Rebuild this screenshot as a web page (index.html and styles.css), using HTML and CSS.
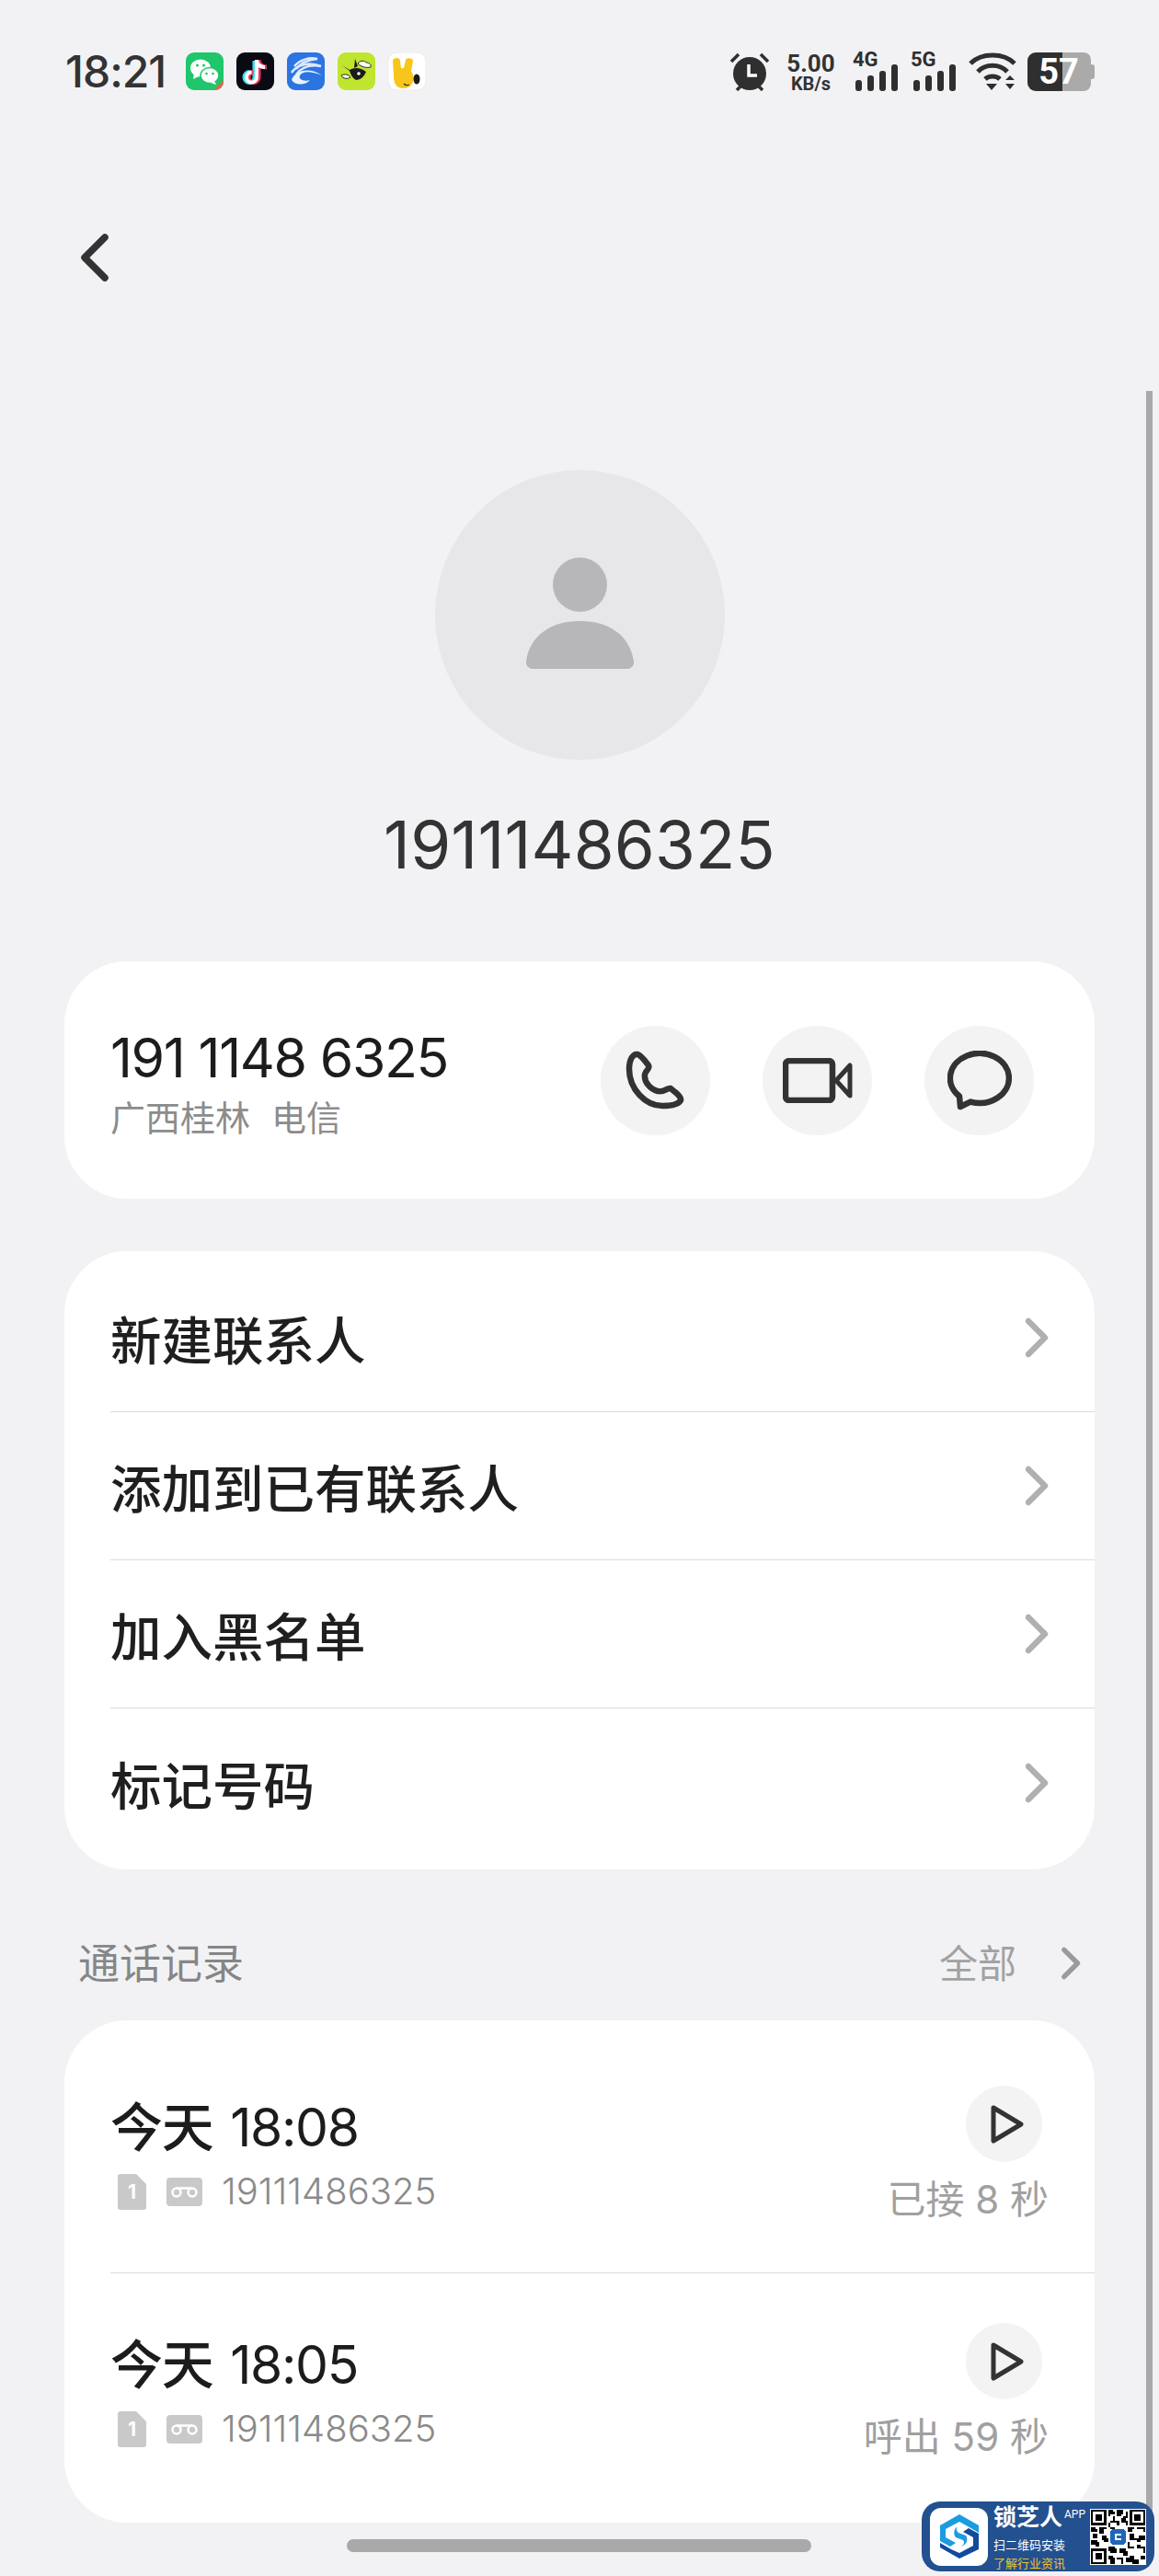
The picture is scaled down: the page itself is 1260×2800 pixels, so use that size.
FILE: index.html
```html
<!DOCTYPE html>
<html>

<head>
    <meta charset="utf-8">
    <link rel="stylesheet" href="styles.css">
</head>

<body>
    <div class="screen">
        <div class="status">
            <div class="status-left">
                <span class="clock">18:21</span>
                <svg class="app" viewBox="0 0 41 41">
                    <rect width="41" height="41" rx="9" fill="#1fc66b" />
                    <ellipse cx="16" cy="17" rx="11" ry="9.500" fill="#fff" />
                    <path d="M9 23l-1 6 6-3z" fill="#fff" />
                    <ellipse cx="26" cy="25" rx="10" ry="8.500" fill="#fff" stroke="#1fc66b" stroke-width="1.500" />
                    <path d="M31 31l2 4-6-2z" fill="#fff" />
                    <circle cx="12.500" cy="14" r="1.500" fill="#1fc66b" />
                    <circle cx="19.500" cy="14" r="1.500" fill="#1fc66b" />
                    <circle cx="22.500" cy="23" r="1.300" fill="#1fc66b" />
                    <circle cx="29.500" cy="23" r="1.300" fill="#1fc66b" />
                    <path d="M41 30v2a9 9 0 0 1-9 9h-2z" fill="#d9694f" />
                </svg>
                <svg class="app" viewBox="0 0 41 41">
                    <rect width="41" height="41" rx="9" fill="#0a0a14" />
                    <path d="M20 9v18a5.500 5.500 0 1 1-5.500-5.500" fill="none" stroke="#3de3ea" stroke-width="5" />
                    <path d="M24 8v19a5.500 5.500 0 1 1-5.500-5.500M24 9c1 5 4 7 9 7" fill="none" stroke="#f0345c" stroke-width="5" />
                    <path d="M22 8v19a5.500 5.500 0 1 1-5.500-5.500M22 9c1 5 4 7 9 7" fill="none" stroke="#fff" stroke-width="4" />
                </svg>
                <svg class="app" viewBox="0 0 41 41">
                    <rect width="41" height="41" rx="9" fill="#2b74e2" />
                    <path d="M8 15C14 8 24 5 33 7C24 8 15 11 10 18" fill="none" stroke="#dbe9fb" stroke-width="2.500" />
                    <path d="M5 22C11 13 24 10 37 15C26 13 16 16 10 24" fill="none" stroke="#dbe9fb" stroke-width="2.500" />
                    <path d="M5 30C8 20 24 15 38 25C26 20 17 20 14 25C12 29 18 32 25 30C20 36 9 36 5 30Z" fill="#eaf2fd" />
                </svg>
                <svg class="app" viewBox="0 0 41 41">
                    <rect width="41" height="41" rx="9" fill="#bfe52e" />
                    <path d="M22 12c3-4 8-3 9-1 4 0 6 3 5 5-5 1-10 0-14-4z" fill="#fff" stroke="#222" />
                    <path d="M5 14l8 5c5-3 12-3 18 2-2 5-6 9-11 9-4-2-6-7-7-10z" fill="#1b1b1b" />
                    <path d="M4 25c4-2 8-1 10 2-3 2-8 2-10-2z" fill="#fff" stroke="#222" />
                    <path d="M19 7l3 8-4 2z" fill="#1b1b1b" />
                    <circle cx="23" cy="23" r="1.800" fill="#fff" />
                </svg>
                <svg class="app" viewBox="0 0 41 41">
                    <rect width="41" height="41" rx="9" fill="#fff" stroke="#e8e8e8" />
                    <path d="M5 9c0-4 8-4 8 0l1 8 3 0 2-9c1-3 8-2 8 1l-2 12c5 5 3 18-8 18-9 0-11-6-11-14z" fill="#f8c51c" />
                    <ellipse cx="31" cy="29" rx="3.500" ry="5.500" fill="#1a1a1a" />
                    <path d="M17 34c2 2 4 2 6 1" fill="none" stroke="#333" stroke-width="1.300" />
                </svg>
            </div>
            <div class="status-right">
                <svg class="alarm" viewBox="0 0 44 42">
                    <circle cx="22" cy="23" r="18" fill="#2f2f2f" />
                    <path d="M2 10L10 2M42 10L34 2M8 41l4-4M36 41l-4-4" stroke="#2f2f2f" stroke-width="3.500" />
                    <path d="M21 13v12h9" fill="none" stroke="#fff" stroke-width="3.500" />
                </svg>
                <div class="speed"><span>5.00</span><span class="speed-unit">KB/s</span></div>
                <div class="signal">
                    <span class="signal-label">4G</span>
                    <svg width="50" height="42" viewBox="0 0 50 42">
                        <rect x="3" y="30" width="7" height="12" rx="3" />
                        <rect x="16" y="25" width="7" height="17" rx="3" />
                        <rect x="29" y="20" width="7" height="22" rx="3" />
                        <rect x="42" y="13" width="7" height="29" rx="3" />
                    </svg>
                </div>
                <div class="signal">
                    <span class="signal-label">5G</span>
                    <svg width="50" height="42" viewBox="0 0 50 42">
                        <rect x="3" y="30" width="7" height="12" rx="3" />
                        <rect x="16" y="25" width="7" height="17" rx="3" />
                        <rect x="29" y="20" width="7" height="22" rx="3" />
                        <rect x="42" y="13" width="7" height="29" rx="3" />
                    </svg>
                </div>
                <svg class="wifi" viewBox="0 0 52 42">
                    <path d="M2 12C14 0 38 0 50 12M10 21C18 12 34 12 42 21M18 29C22 25 30 25 34 29" fill="none" stroke="#2f2f2f" stroke-width="5" />
                    <path d="M19 34h12l-6 7zM40 30l5-5 5 5zM40 34h10l-5 6z" fill="#2f2f2f" />
                </svg>
                <svg class="battery" viewBox="0 0 73 42">
                    <path d="M38 0h23a8 8 0 0 1 8 8v26a8 8 0 0 1-8 8H38z" fill="#aaaaaa" />
                    <path d="M69 13h1a3 3 0 0 1 3 3v10a3 3 0 0 1-3 3h-1z" fill="#aaaaaa" />
                    <path d="M38 0H9a9 9 0 0 0-9 9v24a9 9 0 0 0 9 9h29z" fill="#2f2f2f" />
                    <text x="34" y="34" class="battery-level">57</text>
                </svg>
            </div>
        </div>

        <svg class="back" viewBox="0 0 34 54">
            <path d="M29 5L7 27l22 22" fill="none" stroke="#333" stroke-width="7.500" stroke-linecap="round" stroke-linejoin="round" />
        </svg>

        <div class="hero">
            <div class="avatar">
                <svg class="avatar-person" viewBox="0 0 117 121">
                    <circle cx="58.500" cy="29.500" r="29.500" />
                    <path d="M0 113C4 84 28 69 58.500 69S113 84 117 113a7 7 0 0 1-6 8H6a7 7 0 0 1-6-8z" />
                </svg>
            </div>
            <h1 class="title">19111486325</h1>
        </div>

        <div class="card number-card">
            <div class="number-info">
                <div class="number">191 1148 6325</div>
                <div class="region"><span>广西桂林</span><span>电信</span></div>
            </div>
            <div class="actions">
                <div class="circle action">
                    <svg width="65" height="65" viewBox="0 0 65 65">
                        <path d="M13 4C8 3 4 10 4 20C4 42 22 60 40 60C50 60 58 58 60 54C61 50 54 45 49 41C45 40 42 46 35 44C27 42 20 34 21 26C22 21 27 20 25 16C22 12 17 5 13 4Z" class="line" stroke-width="6.500" />
                    </svg>
                </div>
                <div class="circle action">
                    <svg width="76" height="49" viewBox="0 0 76 49">
                        <rect x="3" y="3" width="51" height="43" rx="4" class="line" stroke-width="6.500" />
                        <path d="M58 24.500L73 8V41Z" class="line" stroke-width="5" />
                    </svg>
                </div>
                <div class="circle action">
                    <svg width="70" height="65" viewBox="0 0 70 65">
                        <path d="M25 55.600A32 27 0 1 0 13 49.600L14 61Z" class="line" stroke-width="6.500" />
                    </svg>
                </div>
            </div>
        </div>

        <div class="card menu-card">
            <div class="menu-row">
                <span>新建联系人</span>
                <svg class="chevron" viewBox="0 0 26 44"><path d="M3 4l18 18L3 40" /></svg>
            </div>
            <div class="menu-row">
                <span>添加到已有联系人</span>
                <svg class="chevron" viewBox="0 0 26 44"><path d="M3 4l18 18L3 40" /></svg>
            </div>
            <div class="menu-row">
                <span>加入黑名单</span>
                <svg class="chevron" viewBox="0 0 26 44"><path d="M3 4l18 18L3 40" /></svg>
            </div>
            <div class="menu-row">
                <span>标记号码</span>
                <svg class="chevron" viewBox="0 0 26 44"><path d="M3 4l18 18L3 40" /></svg>
            </div>
        </div>

        <div class="section-head">
            <span class="section-title">通话记录</span>
            <span class="section-all">全部</span>
            <svg class="section-chevron" viewBox="0 0 26 44"><path d="M3 4l18 18L3 40" /></svg>
        </div>

        <div class="card calls-card">
            <div class="call-row">
                <div class="call-info">
                    <div class="call-time"><span class="call-day">今天</span> 18:08</div>
                    <div class="call-sub">
                        <svg class="sim" viewBox="0 0 31 39">
                            <path d="M3 0h17l11 11v25a3 3 0 0 1-3 3H3a3 3 0 0 1-3-3V3a3 3 0 0 1 3-3z" />
                            <text x="15.500" y="27" class="sim-num">1</text>
                        </svg>
                        <svg class="voicemail" viewBox="0 0 39 31">
                            <rect width="39" height="31" rx="4" />
                            <circle cx="11" cy="16" r="4.500" class="vm-ring" />
                            <circle cx="28" cy="16" r="4.500" class="vm-ring" />
                            <path d="M11 11.500h17" class="vm-ring" />
                        </svg>
                        <span class="call-number">19111486325</span>
                    </div>
                </div>
                <div class="call-side">
                    <div class="circle play">
                        <svg width="36" height="42" viewBox="0 0 36 42"><path d="M3 3L33 21 3 39Z" class="line" stroke-width="5" /></svg>
                    </div>
                    <div class="call-result">已接 8 秒</div>
                </div>
            </div>
            <div class="call-row">
                <div class="call-info">
                    <div class="call-time"><span class="call-day">今天</span> 18:05</div>
                    <div class="call-sub">
                        <svg class="sim" viewBox="0 0 31 39">
                            <path d="M3 0h17l11 11v25a3 3 0 0 1-3 3H3a3 3 0 0 1-3-3V3a3 3 0 0 1 3-3z" />
                            <text x="15.500" y="27" class="sim-num">1</text>
                        </svg>
                        <svg class="voicemail" viewBox="0 0 39 31">
                            <rect width="39" height="31" rx="4" />
                            <circle cx="11" cy="16" r="4.500" class="vm-ring" />
                            <circle cx="28" cy="16" r="4.500" class="vm-ring" />
                            <path d="M11 11.500h17" class="vm-ring" />
                        </svg>
                        <span class="call-number">19111486325</span>
                    </div>
                </div>
                <div class="call-side">
                    <div class="circle play">
                        <svg width="36" height="42" viewBox="0 0 36 42"><path d="M3 3L33 21 3 39Z" class="line" stroke-width="5" /></svg>
                    </div>
                    <div class="call-result">呼出 59 秒</div>
                </div>
            </div>
        </div>

        <div class="scrollbar"></div>
        <div class="home-bar"></div>

        <div class="promo">
            <div class="promo-logo">
                <svg width="48" height="50" viewBox="0 0 48 50">
                    <path d="M24 1L45 13v8L33 14 24 9 9 17v9l11 6-6 4-11-6V13z" fill="#1b9ce0" />
                    <path d="M24 49L3 37v-5l12 7 9 4 15-8v-9l-11-6 6-4 11 6v17z" fill="#124a9c" />
                    <path d="M22 14c-4 3-5 8-2 12l8 3c2 2 1 5-2 7 6-2 8-8 5-12l-8-3c-2-2-3-4-1-7z" fill="#1b9ce0" />
                </svg>
            </div>
            <div class="promo-text">
                <div class="promo-name">锁芝人<span class="promo-app">APP</span></div>
                <div class="promo-line">扫二维码安装</div>
                <div class="promo-line promo-line-gold">了解行业资讯</div>
            </div>
            <div class="promo-qr">
                <svg width="59" height="59" viewBox="0 0 25 25" shape-rendering="crispEdges">
                    <path d="M0 0h7v7H0zM1 1v5h5V1zM2 2h3v3H2zM18 0h7v7h-7zM19 1v5h5V1zM20 2h3v3h-3zM0 18h7v7H0zM1 19v5h5v-5zM2 20h3v3H2z" fill-rule="evenodd" />
                    <path d="M8 0h2v1h1v1H9v1H8zM12 0h3v2h-1v1h-2zM16 1h1v3h-2V3h1zM10 3h1v2h2v2h-1V6h-2H9V5h1zM14 4h2v1h1v2h-1V6h-2zM8 6h1v2H8zM0 8h2v1h1v1H0zM4 8h3v1H6v2H4zM9 8h2v1H9zM17 8h3v1h-1v1h-2zM21 8h4v2h-1V9h-3zM1 11h2v2H1zM5 12h2v1h1v2H6v-1H5zM0 14h3v1h1v2H2v-1H0zM18 11h2v2h2v-1h3v2h-2v1h-2v-1h-3zM17 15h1v2h2v1h-3zM21 16h2v1h2v3h-1v-2h-3zM8 17h3v1h1v2H9v-1H8zM13 18h3v1h1v2h-2v-1h-2zM8 21h2v1h1v3H9v-2H8zM12 22h3v3h-1v-2h-2zM16 22h2v-1h2v2h2v2h-3v-1h-3zM23 21h2v2h-2z" />
                    <rect x="9" y="9" width="7" height="7" rx="1" fill="#1f66bb" />
                    <path d="M11 11h3v1h-2v1h2v1h-3" fill="#fff" />
                </svg>
            </div>
        </div>
    </div>
</body>

</html>
```

FILE: styles.css
```css
* {
    box-sizing: border-box;
}

body {
    margin: 0;
    background: #f2f2f5;
    font-family: "Inter", "Noto Sans CJK SC", sans-serif;
}

.screen {
    position: relative;
    width: 1260px;
    height: 2800px;
    overflow: hidden;
    background: #f2f2f5;
}

/* status bar */
.status {
    display: flex;
    justify-content: space-between;
    height: 99px;
    padding: 57px 70px 0 71px;
}

.status-left,
.status-right {
    display: flex;
    align-items: flex-start;
}

.clock {
    width: 131px;
    font-size: 48px;
    line-height: 42px;
    font-weight: 500;
    color: #333;
    letter-spacing: -1px;
}

.app {
    width: 41px;
    height: 41px;
    margin-right: 14px;
}

.alarm {
    width: 44px;
    height: 42px;
    margin-right: 18px;
}

.speed {
    display: flex;
    flex-direction: column;
    align-items: center;
    width: 53px;
    margin-right: 19px;
    font-family: "Roboto", sans-serif;
    font-weight: 700;
    font-size: 26px;
    line-height: 24px;
    color: #333;
}

.speed-unit {
    font-size: 20px;
    line-height: 20px;
}

.signal {
    position: relative;
    width: 50px;
    height: 42px;
    margin-right: 13px;
    fill: #2f2f2f;
}

.signal svg {
    display: block;
}

.signal-label {
    position: absolute;
    left: 0;
    top: 0;
    font-family: "Roboto", sans-serif;
    font-weight: 700;
    font-size: 22px;
    line-height: 16px;
    color: #2f2f2f;
}

.wifi {
    width: 52px;
    height: 42px;
    margin-right: 12px;
}

.battery {
    width: 73px;
    height: 42px;
}

.battery-level {
    font-family: "Roboto", sans-serif;
    font-weight: 700;
    font-size: 38px;
    fill: #fff;
    text-anchor: middle;
}

.back {
    display: block;
    width: 34px;
    height: 54px;
    margin: 154px 0 0 85px;
}

/* avatar and name */
.hero {
    display: flex;
    flex-direction: column;
    align-items: center;
    margin-top: 204px;
}

.avatar {
    display: flex;
    align-items: center;
    justify-content: center;
    width: 315px;
    height: 315px;
    border-radius: 50%;
    background: #e7e7e9;
}

.avatar-person {
    width: 117px;
    height: 121px;
    margin-bottom: 4px;
    fill: #b7b7b9;
}

.title {
    margin: 52px 0 0;
    font-size: 71px;
    line-height: 80px;
    font-weight: 400;
    color: #333;
    letter-spacing: 0.200px;
}

/* cards */
.card {
    width: 1120px;
    margin-left: 70px;
    border-radius: 68px;
    background: #fff;
}

.number-card {
    display: flex;
    align-items: center;
    justify-content: space-between;
    height: 258px;
    margin-top: 87px;
    padding: 0 66px 0 50px;
}

.number {
    font-size: 59px;
    line-height: 70px;
    color: #1c1c1c;
    letter-spacing: -1.400px;
}

.region {
    display: flex;
    gap: 23px;
    font-size: 38px;
    line-height: 46px;
    color: #8c8c8c;
    margin-top: 7px;
    margin-bottom: -5px;
}

.actions {
    display: flex;
    gap: 57px;
}

.circle {
    display: flex;
    align-items: center;
    justify-content: center;
    border-radius: 50%;
    background: #f3f3f3;
}

.action {
    width: 119px;
    height: 119px;
}

.line {
    fill: none;
    stroke: #333;
    stroke-linejoin: round;
}

.menu-card {
    margin-top: 57px;
    padding: 14px 0;
}

.menu-row {
    display: flex;
    align-items: center;
    justify-content: space-between;
    height: 161px;
    margin-left: 50px;
    padding-right: 49px;
    font-size: 55.500px;
    font-weight: 500;
    color: #1f1f1f;
    border-bottom: 1px solid #dcdcdc;
}

.menu-row:last-child {
    border-bottom: 0;
}

.chevron {
    width: 26px;
    height: 44px;
    fill: none;
    stroke: #b0b0b0;
    stroke-width: 6.500;
    stroke-linecap: round;
    stroke-linejoin: round;
}

/* call log */
.section-head {
    display: flex;
    align-items: center;
    height: 64px;
    margin: 70px 0 30px;
    padding: 0 84px 6px 85px;
}

.section-title {
    flex: 1;
    font-size: 45px;
    color: #868686;
}

.section-all {
    font-size: 42px;
    color: #a2a2a2;
    margin-right: 49px;
}

.section-chevron {
    width: 22px;
    height: 36px;
    margin-top: 6px;
    fill: none;
    stroke: #9a9a9a;
    stroke-width: 6.500;
    stroke-linecap: round;
    stroke-linejoin: round;
}

.calls-card {
    margin-top: 0;
    padding: 17px 0 13px;
}

.call-row {
    display: flex;
    justify-content: space-between;
    height: 258px;
    margin-left: 50px;
    padding: 54px 50px 0 0;
    border-bottom: 1px solid #dcdcdc;
}

.call-row:last-child {
    border-bottom: 0;
}

.call-info {
    padding-top: 11px;
}

.call-time {
    font-size: 57px;
    line-height: 70px;
    color: #1c1c1c;
    letter-spacing: -1.300px;
}

.call-day {
    margin-right: 4px;
    font-weight: 500;
}

.call-sub {
    display: flex;
    align-items: center;
    height: 40px;
    margin-top: 14px;
    padding-left: 8px;
}

.sim {
    width: 31px;
    height: 39px;
    margin-right: 22px;
    fill: #c9c9c9;
}

.sim-num {
    font-size: 21px;
    font-weight: 700;
    fill: #fff;
    text-anchor: middle;
}

.voicemail {
    width: 39px;
    height: 31px;
    margin-right: 21px;
    fill: #c9c9c9;
}

.vm-ring {
    fill: none;
    stroke: #fff;
    stroke-width: 2.500;
}

.call-number {
    font-size: 40px;
    line-height: 40px;
    font-weight: 300;
    color: #8a8a8a;
}

.call-side {
    display: flex;
    flex-direction: column;
    align-items: flex-end;
}

.play {
    width: 83px;
    height: 83px;
    margin-right: 7px;
    padding-left: 6px;
}

.call-result {
    margin-top: 16px;
    font-size: 42px;
    line-height: 50px;
    color: #a0a0a0;
}

/* overlays */
.scrollbar {
    position: absolute;
    left: 1246px;
    top: 425px;
    width: 7px;
    height: 2320px;
    background: #a9a9a9;
}

.home-bar {
    position: absolute;
    left: 377px;
    top: 2760px;
    width: 505px;
    height: 14px;
    border-radius: 7px;
    background: #a9a9a9;
}

.promo {
    position: absolute;
    left: 1002px;
    top: 2719px;
    display: flex;
    align-items: center;
    width: 253px;
    height: 76px;
    padding: 0 9px;
    border-radius: 20px;
    background: #23508f;
}

.promo-logo {
    display: flex;
    align-items: center;
    justify-content: center;
    flex: none;
    width: 63px;
    height: 63px;
    border-radius: 12px;
    background: #fff;
}

.promo-text {
    width: 105px;
    margin-left: 6px;
    font-family: "Noto Sans CJK SC", sans-serif;
    color: #fff;
}

.promo-name {
    font-size: 25px;
    line-height: 30px;
    font-weight: 700;
    white-space: nowrap;
}

.promo-app {
    position: relative;
    top: -8px;
    margin-left: 2px;
    font-family: "Roboto", sans-serif;
    font-size: 12px;
    font-weight: 400;
}

.promo-line {
    font-size: 13px;
    line-height: 20px;
}

.promo-line-gold {
    color: #ecc52e;
}

.promo-qr {
    display: flex;
    align-items: center;
    justify-content: center;
    flex: none;
    width: 61px;
    height: 61px;
    background: #fff;
}
```
